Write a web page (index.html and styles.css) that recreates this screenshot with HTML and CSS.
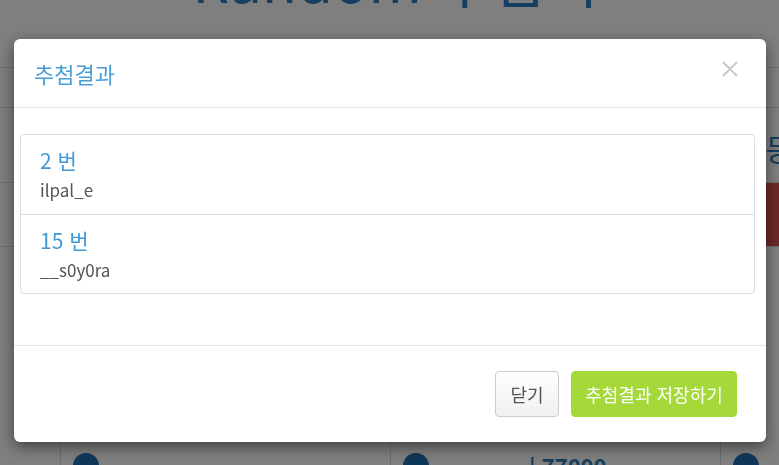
FILE: index.html
```html
<!DOCTYPE html>
<html lang="ko">
<head>
  <meta charset="UTF-8" />
  <meta name="viewport" content="width=device-width, initial-scale=1.0" />
  <title>Random 추첨기</title>
  <link rel="stylesheet" href="styles.css">
</head>
<body>
  <div class="page">
    <div class="page-head">
      <h1 class="page-title">Random 추첨기</h1>
    </div>
    <div class="page-tabs"></div>
    <div class="page-form">
      <span class="form-label">등</span>
    </div>
    <div class="page-action">
      <span class="action-btn"></span>
    </div>
    <div class="page-list"></div>
    <div class="cards">
      <div class="card"><span class="dot"></span></div>
      <div class="card"><span class="dot"></span><span class="card-num">| 77000</span></div>
      <div class="card"><span class="dot"></span></div>
    </div>
  </div>

  <div class="backdrop">
    <div class="modal">
      <div class="modal-header">
        <h4 class="modal-title">추첨결과</h4>
        <button class="close" aria-label="닫기">
          <svg width="16" height="16" viewBox="0 0 16 16">
            <path d="M1 1 L15 15 M15 1 L1 15" stroke="#c9c9c9" stroke-width="2" fill="none" />
          </svg>
        </button>
      </div>
      <div class="modal-body">
        <ul class="result-list">
          <li class="result-item">
            <div class="result-no">2 번</div>
            <div class="result-id">ilpal_e</div>
          </li>
          <li class="result-item">
            <div class="result-no">15 번</div>
            <div class="result-id">__s0y0ra</div>
          </li>
        </ul>
      </div>
      <div class="modal-footer">
        <button class="btn btn-default">닫기</button>
        <button class="btn btn-save">추첨결과 저장하기</button>
      </div>
    </div>
  </div>
</body>
</html>
```

FILE: styles.css
```css
:root {
  --blue: #3f97d4;
  --title-blue: #4a9ed8;
  --text: #555;
  --line: #ddd;
  --green: #a5d93a;
  --font: "Noto Sans CJK KR", "Noto Sans", sans-serif;
}
* { box-sizing: border-box; margin: 0; padding: 0; }
body {
  background: #fff;
  font-family: var(--font);
  height: 100vh;
  overflow: hidden;
}

/* page behind the modal */
.page {
  width: 100%;
}
.page-head {
  height: 68px;
  border-bottom: 1px solid var(--line);
  overflow: hidden;
}
.page-title {
  font-size: 58px;
  font-weight: 400;
  line-height: 60px;
  color: #2b7cc0;
  text-align: center;
  margin-top: -52px;
  padding-left: 12px;
}
.page-tabs {
  height: 40px;
  border-bottom: 1px solid var(--line);
}
.page-form {
  height: 75px;
  border-bottom: 1px solid var(--line);
  display: flex;
  justify-content: flex-end;
  align-items: flex-start;
  padding-top: 22px;
}
.form-label {
  font-size: 30px;
  line-height: 36px;
  color: #2b7cc0;
  margin-right: -14px;
}
.page-action {
  height: 64px;
  border-bottom: 1px solid var(--line);
  display: flex;
  justify-content: flex-end;
}
.action-btn {
  width: 17px;
  background: #d9534f;
}
.page-list {
  height: 194px;
}
.cards {
  display: grid;
  grid-template-columns: 330px 330px 59px;
  margin-left: 60px;
  height: 40px;
}
.card {
  border-left: 1px solid var(--line);
  padding: 12px 0 0 12px;
  display: flex;
  gap: 100px;
}
.dot {
  width: 26px;
  height: 26px;
  border-radius: 50%;
  background: #1f6fb5;
  flex: none;
}
.card-num {
  font-size: 22px;
  font-weight: 700;
  color: #2b7cc0;
  line-height: 26px;
}

/* modal */
.backdrop {
  position: fixed;
  inset: 0;
  background: rgba(0, 0, 0, 0.5);
}
.modal {
  width: 752px;
  margin: 39px 0 0 14px;
  background: #fff;
  border-radius: 6px;
  box-shadow: 0 5px 15px rgba(0, 0, 0, 0.5);
}
.modal-header {
  display: flex;
  justify-content: space-between;
  align-items: center;
  padding: 19px 28px 19px 20px;
  border-bottom: 1px solid #e5e5e5;
}
.modal-title {
  font-size: 22px;
  font-weight: 400;
  line-height: 30px;
  color: var(--title-blue);
}
.close {
  background: none;
  border: none;
  width: 16px;
  height: 16px;
  margin-top: -8px;
  cursor: pointer;
}
.close svg { display: block; }
.modal-body {
  padding: 26px 11px 51px 6px;
}
.result-list {
  list-style: none;
  border: 1px solid var(--line);
  border-radius: 4px;
}
.result-item {
  padding: 11px 19px 12px;
}
.result-item + .result-item {
  border-top: 1px solid var(--line);
  padding-bottom: 11px;
}
.result-no {
  font-size: 21px;
  line-height: 28px;
  color: var(--blue);
  margin-bottom: 4px;
}
.result-id {
  font-size: 17px;
  line-height: 24px;
  color: var(--text);
}
.modal-footer {
  display: flex;
  justify-content: flex-end;
  gap: 12px;
  padding: 25px 29px 25px;
  border-top: 1px solid #e5e5e5;
}
.btn {
  height: 46px;
  font-family: var(--font);
  font-size: 18px;
  border-radius: 4px;
  cursor: pointer;
}
.btn-default {
  width: 64px;
  color: #555;
  background: linear-gradient(#fff, #f0f0f0);
  border: 1px solid #ccc;
}
.btn-save {
  width: 166px;
  color: #fff;
  background: var(--green);
  border: 1px solid var(--green);
}
```
